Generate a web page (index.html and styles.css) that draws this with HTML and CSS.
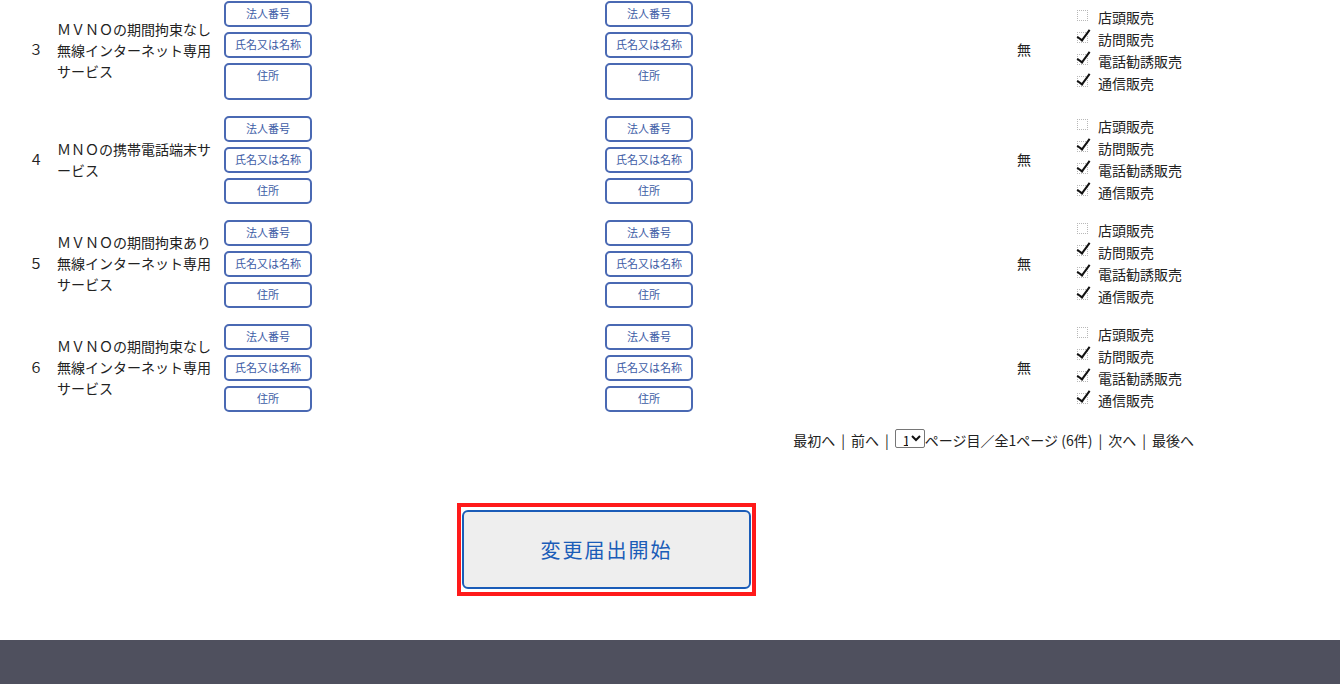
FILE: index.html
```html
<!DOCTYPE html>
<html lang="ja">
<head>
    <meta charset="UTF-8">
    <title>変更届出</title>
    <link rel="stylesheet" href="styles.css">
</head>
<body>
    <div class="list">
        <div class="row">
            <div class="num">３</div>
            <div class="name">ＭＶＮＯの期間拘束なし無線インターネット専用サービス</div>
            <div class="btns">
                <button class="sub">法人番号</button>
                <button class="sub">氏名又は名称</button>
                <button class="sub tall">住所</button>
            </div>
            <div></div>
            <div class="btns">
                <button class="sub">法人番号</button>
                <button class="sub">氏名又は名称</button>
                <button class="sub tall">住所</button>
            </div>
            <div></div>
            <div class="flag">無</div>
            <div></div>
            <ul class="checks">
                <li><span class="box"></span>店頭販売</li>
                <li><span class="box on"></span>訪問販売</li>
                <li><span class="box on"></span>電話勧誘販売</li>
                <li><span class="box on"></span>通信販売</li>
            </ul>
        </div>
        <div class="row">
            <div class="num">４</div>
            <div class="name">ＭＮＯの携帯電話端末サービス</div>
            <div class="btns">
                <button class="sub">法人番号</button>
                <button class="sub">氏名又は名称</button>
                <button class="sub">住所</button>
            </div>
            <div></div>
            <div class="btns">
                <button class="sub">法人番号</button>
                <button class="sub">氏名又は名称</button>
                <button class="sub">住所</button>
            </div>
            <div></div>
            <div class="flag">無</div>
            <div></div>
            <ul class="checks">
                <li><span class="box"></span>店頭販売</li>
                <li><span class="box on"></span>訪問販売</li>
                <li><span class="box on"></span>電話勧誘販売</li>
                <li><span class="box on"></span>通信販売</li>
            </ul>
        </div>
        <div class="row">
            <div class="num">５</div>
            <div class="name">ＭＶＮＯの期間拘束あり無線インターネット専用サービス</div>
            <div class="btns">
                <button class="sub">法人番号</button>
                <button class="sub">氏名又は名称</button>
                <button class="sub">住所</button>
            </div>
            <div></div>
            <div class="btns">
                <button class="sub">法人番号</button>
                <button class="sub">氏名又は名称</button>
                <button class="sub">住所</button>
            </div>
            <div></div>
            <div class="flag">無</div>
            <div></div>
            <ul class="checks">
                <li><span class="box"></span>店頭販売</li>
                <li><span class="box on"></span>訪問販売</li>
                <li><span class="box on"></span>電話勧誘販売</li>
                <li><span class="box on"></span>通信販売</li>
            </ul>
        </div>
        <div class="row">
            <div class="num">６</div>
            <div class="name">ＭＶＮＯの期間拘束なし無線インターネット専用サービス</div>
            <div class="btns">
                <button class="sub">法人番号</button>
                <button class="sub">氏名又は名称</button>
                <button class="sub">住所</button>
            </div>
            <div></div>
            <div class="btns">
                <button class="sub">法人番号</button>
                <button class="sub">氏名又は名称</button>
                <button class="sub">住所</button>
            </div>
            <div></div>
            <div class="flag">無</div>
            <div></div>
            <ul class="checks">
                <li><span class="box"></span>店頭販売</li>
                <li><span class="box on"></span>訪問販売</li>
                <li><span class="box on"></span>電話勧誘販売</li>
                <li><span class="box on"></span>通信販売</li>
            </ul>
        </div>
    </div>

    <div class="pager">
        最初へ<span class="sep">|</span>前へ<span class="sep">|</span><select class="page-select"><option>1</option></select>ページ目／全1ページ (6件)<span class="sep">|</span>次へ<span class="sep">|</span>最後へ
    </div>

    <div class="submit-area">
        <div class="focus-ring">
            <button class="start">変更届出開始</button>
        </div>
    </div>

    <footer class="footer"></footer>
</body>
</html>
```

FILE: styles.css
```css
body {
    margin: 0;
    font-family: "Noto Sans CJK JP", "Noto Sans", sans-serif;
    font-size: 14px;
    color: #222;
    background-color: #fff;
}
.list {
    display: flex;
    flex-direction: column;
    gap: 16px;
    padding: 1px 0 0 22px;
}
.row {
    display: grid;
    grid-template-columns: 28px 174px 88px 293px 88px 307px 48px 29px auto;
    align-items: center;
}
.num {
    text-align: center;
    line-height: 21px;
    margin-top: -2px;
}
.name {
    padding-left: 7px;
    width: 160px;
    line-height: 21px;
    margin-top: -1px;
}
.btns {
    display: flex;
    flex-direction: column;
    gap: 5px;
}
.sub {
    box-sizing: border-box;
    width: 88px;
    height: 26px;
    padding: 0 0 2px;
    border: 2px solid #4a69b3;
    border-radius: 5px;
    background-color: #fff;
    color: #3d5ca6;
    font-family: inherit;
    font-size: 11px;
    line-height: 20px;
    display: flex;
    justify-content: center;
    align-items: flex-start;
}
.sub.tall {
    height: 37px;
}
.flag {
    text-align: center;
    line-height: 21px;
    margin-top: -2px;
}
.checks {
    list-style: none;
    margin: -2px 0 0;
    padding: 0;
}
.checks li {
    display: flex;
    align-items: center;
    height: 22px;
    line-height: 22px;
}
.box {
    position: relative;
    box-sizing: border-box;
    width: 11px;
    height: 11px;
    margin: -3px 10px 0 0;
    border: 1px dotted #b8b8b8;
}
.box.on::after {
    content: "";
    position: absolute;
    left: 2px;
    top: -6px;
    width: 5px;
    height: 12px;
    border: solid #111;
    border-width: 0 2.5px 2px 0;
    transform: rotate(36deg);
    transform-origin: center;
}
.pager {
    margin-top: 17px;
    padding-right: 146px;
    text-align: right;
    line-height: 21px;
    font-size: 14px;
}
.sep {
    margin: 0 6px 0 6px;
}
.page-select {
    height: 19px;
    width: 30px;
    font-size: 13px;
    padding: 0 0 0 3px;
    margin: 0;
    border: 1px solid #767676;
    border-radius: 2px;
    background-color: #fff;
    color: #111;
    font-family: inherit;
}
.submit-area {
    margin-top: 52px;
    padding-left: 457px;
}
.focus-ring {
    box-sizing: border-box;
    width: 299px;
    height: 93px;
    border: 4px solid #ff1a1a;
    padding: 3px 1px 0 1px;
}
.start {
    box-sizing: border-box;
    width: 289px;
    height: 79px;
    border: 2px solid #1a5cb8;
    border-radius: 6px;
    background-color: #eeeeee;
    color: #1a5cb8;
    font-family: inherit;
    font-size: 20px;
    letter-spacing: 2px;
    cursor: pointer;
}
.footer {
    margin-top: 44px;
    height: 60px;
    background-color: #4f505e;
}
```
